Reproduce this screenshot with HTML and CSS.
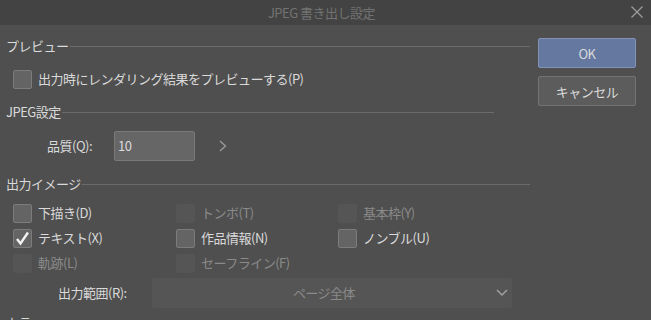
FILE: index.html
```html
<!DOCTYPE html>
<html lang="ja">
<head>
    <meta charset="UTF-8">
    <meta name="viewport" content="width=device-width, initial-scale=1.0">
    <title>JPEG 書き出し設定</title>
    <link rel="stylesheet" href="styles.css">
</head>
<body>
    <div class="titlebar">
        <span class="title">JPEG 書き出し設定</span>
        <svg class="close" width="12" height="12" viewBox="0 0 12 12">
            <path d="M0.5 0.5 L11.5 11.5 M11.5 0.5 L0.5 11.5" stroke="#9c9c9c" stroke-width="1.3" fill="none"/>
        </svg>
    </div>
    <div class="dialog-body">
        <div class="main">
            <div class="group-head">プレビュー</div>
            <div class="check first-check">
                <span class="box"></span>
                <span>出力時にレンダリング結果をプレビューする(P)</span>
            </div>

            <div class="group-head short">JPEG設定</div>
            <div class="field quality">
                <span class="field-label">品質(Q):</span>
                <div class="number-input">10</div>
                <svg class="step" width="8" height="12" viewBox="0 0 8 12">
                    <path d="M1 1 L6.5 6 L1 11" stroke="#9a9a9a" stroke-width="1.4" fill="none"/>
                </svg>
            </div>

            <div class="group-head">出力イメージ</div>
            <div class="check-grid">
                <div class="check"><span class="box"></span><span>下描き(D)</span></div>
                <div class="check disabled"><span class="box"></span><span>トンボ(T)</span></div>
                <div class="check disabled"><span class="box"></span><span>基本枠(Y)</span></div>
                <div class="check">
                    <span class="box">
                        <svg width="19" height="19" viewBox="0 0 19 19">
                            <path d="M4 10 L7.5 14.5 L15 3.5" stroke="#f2f2f2" stroke-width="2.4" fill="none"/>
                        </svg>
                    </span>
                    <span>テキスト(X)</span>
                </div>
                <div class="check"><span class="box"></span><span>作品情報(N)</span></div>
                <div class="check"><span class="box"></span><span>ノンブル(U)</span></div>
                <div class="check disabled"><span class="box"></span><span>軌跡(L)</span></div>
                <div class="check disabled"><span class="box"></span><span>セーフライン(F)</span></div>
            </div>
            <div class="field range">
                <span class="field-label">出力範囲(R):</span>
                <div class="select">
                    <span class="select-value">ページ全体</span>
                    <svg width="12" height="8" viewBox="0 0 12 8">
                        <path d="M1 1 L6 6 L11 1" stroke="#a0a0a0" stroke-width="1.5" fill="none"/>
                    </svg>
                </div>
            </div>

            <div class="group-head tail">カラー</div>
        </div>
        <div class="buttons">
            <button class="primary">OK</button>
            <button>キャンセル</button>
        </div>
    </div>
</body>
</html>
```

FILE: styles.css
```css
:root {
    --title-bg: #434343;
    --body-bg: #4f4f4f;
    --text: #dadada;
    --text-dim: #8a8a8a;
    --title-text: #727272;
    --line: #6b6b6b;
    --box-bg: #646464;
    --box-border: #7c7c7c;
    --box-disabled: #555555;
    --primary: #6578a0;
    --primary-border: #8292b6;
    --button: #5c5c5c;
    --button-border: #747474;
}
html, body {
    margin: 0;
}
body {
    width: 651px;
    height: 320px;
    overflow: hidden;
    background-color: var(--body-bg);
    color: var(--text);
    font-family: "Noto Sans CJK JP", "Liberation Sans", sans-serif;
    font-size: 13px;
    line-height: 18px;
    letter-spacing: -0.5px;
}
.titlebar {
    position: relative;
    height: 25px;
    background-color: var(--title-bg);
    display: flex;
    align-items: center;
    justify-content: center;
}
.title {
    color: var(--title-text);
    margin-right: 8px;
}
.close {
    position: absolute;
    right: 8px;
    top: 6px;
}
.dialog-body {
    display: flex;
    padding: 12px 0 0 6px;
}
.main {
    width: 524px;
}
.group-head {
    display: flex;
    align-items: center;
    height: 18px;
    gap: 1px;
    white-space: nowrap;
}
.group-head::after {
    content: "";
    flex: 1;
    height: 1px;
    background-color: var(--line);
}
.group-head.short {
    margin-top: 14px;
    margin-right: 36px;
}
.check {
    display: flex;
    align-items: center;
    gap: 6px;
    height: 20px;
    white-space: nowrap;
}
.box {
    width: 17px;
    height: 17px;
    border: 1px solid var(--box-border);
    border-radius: 2px;
    background-color: var(--box-bg);
    flex: none;
    position: relative;
}
.box svg {
    position: absolute;
    left: -1px;
    top: -1px;
}
.check.disabled {
    color: var(--text-dim);
}
.check.disabled .box {
    border-color: var(--box-disabled);
    background-color: var(--box-disabled);
}
.first-check {
    margin: 14px 0 0 7px;
}
.field {
    display: flex;
    align-items: center;
    height: 30px;
}
.field-label {
    flex: none;
}
.quality {
    margin-top: 10px;
    margin-bottom: 14px;
    padding-left: 41px;
}
.quality .field-label {
    width: 67px;
}
.number-input {
    box-sizing: border-box;
    width: 81px;
    height: 30px;
    padding-left: 3px;
    line-height: 28px;
    border: 1px solid #7a7a7a;
    border-radius: 2px;
    background-color: #666666;
}
.step {
    margin-left: 24px;
}
.check-grid {
    display: grid;
    grid-template-columns: 163px 162px auto;
    row-gap: 5px;
    margin: 10px 0 0 7px;
}
.range {
    margin-top: 5px;
    padding-left: 52px;
}
.range .field-label {
    width: 94px;
}
.select {
    box-sizing: border-box;
    width: 360px;
    height: 30px;
    display: flex;
    align-items: center;
    padding-right: 4px;
    border-radius: 2px;
    background-color: #555555;
    color: var(--text-dim);
}
.select-value {
    flex: 1;
    text-align: center;
}
.group-head.tail {
    margin-top: 6px;
}
.buttons {
    margin: 1px 0 0 8px;
    width: 98px;
    display: flex;
    flex-direction: column;
    gap: 8px;
}
button {
    box-sizing: border-box;
    height: 30px;
    padding: 0;
    border: 1px solid var(--button-border);
    border-radius: 2px;
    background-color: var(--button);
    color: var(--text);
    font-family: inherit;
    font-size: 13px;
    letter-spacing: inherit;
}
button.primary {
    background-color: var(--primary);
    border-color: var(--primary-border);
}
```
